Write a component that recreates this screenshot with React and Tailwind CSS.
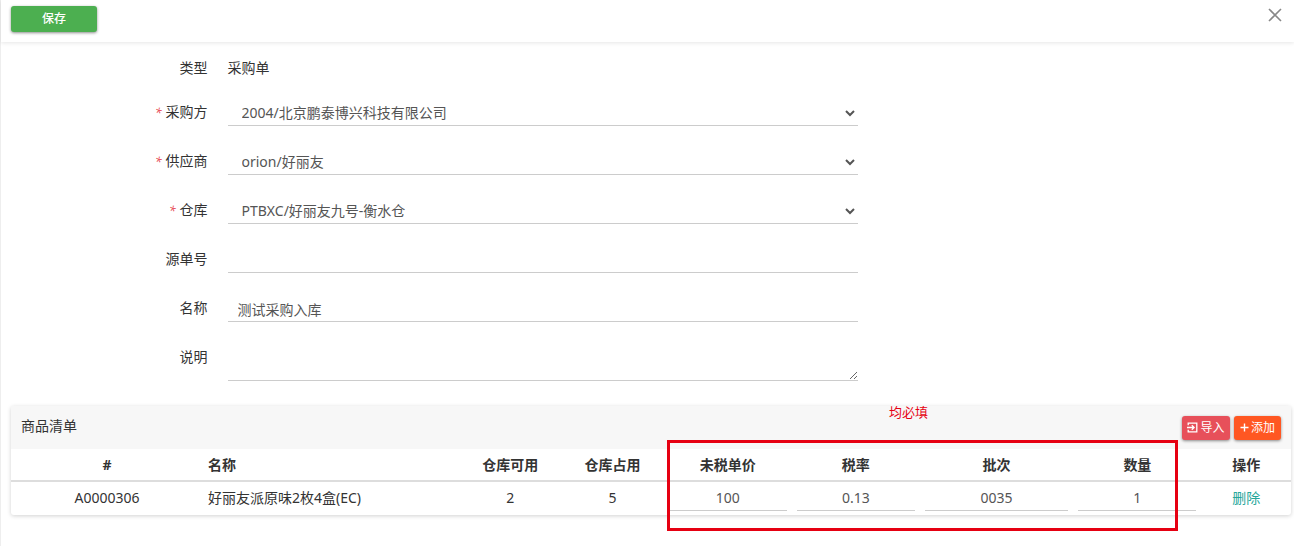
import { useState } from 'react';

const PARTNERS = ['2004/北京鹏泰博兴科技有限公司'];
const SUPPLIERS = ['orion/好丽友'];
const WAREHOUSES = ['PTBXC/好丽友九号-衡水仓'];

const ITEMS = [
  { code: 'A0000306', name: '好丽友派原味2枚4盒(EC)', free: 2, held: 5, price: '100', rate: '0.13', batch: '0035', qty: '1' },
];

const COLUMNS = [
  { title: '#', className: 'w-[15%] text-center' },
  { title: '名称', className: 'w-[20%] text-left' },
  { title: '仓库可用', className: 'w-[8%] text-center' },
  { title: '仓库占用', className: 'w-[8%] text-center' },
  { title: '未税单价', className: 'w-[10%] text-center' },
  { title: '税率', className: 'w-[10%] text-center' },
  { title: '批次', className: 'w-[12%] text-center' },
  { title: '数量', className: 'w-[10%] text-center' },
  { title: '操作', className: 'w-[7%] text-center' },
];

const fieldClass = 'block w-full border-b border-[#ccc] bg-transparent text-[#555] outline-none';

function ImportIcon() {
  return (
    <svg className="h-[11px] w-[11px]" viewBox="0 0 11 11" fill="none" stroke="currentColor" strokeWidth="1.3">
      <path d="M1.2 3.2V1.2h8.6v8.6H1.2V7.8" />
      <path d="M0 5.5h6.8M4.8 3.2l2.3 2.3-2.3 2.3" />
    </svg>
  );
}

function PlusIcon() {
  return (
    <svg className="h-[9px] w-[9px]" viewBox="0 0 9 9" fill="none" stroke="currentColor" strokeWidth="1.4">
      <path d="M4.5 0.5v8M0.5 4.5h8" />
    </svg>
  );
}

function FormRow({ id, label, required, children }) {
  return (
    <div className="flex">
      <label htmlFor={id} className="w-1/6 pr-[9px] pt-[2px] text-right leading-7 text-[#333]">
        {required && <span className="mr-1 text-xs italic text-[#e7505a]">*</span>}
        {label}
      </label>
      <div className="w-1/2 pl-[11px] pr-[5px]">{children}</div>
    </div>
  );
}

function SelectRow({ id, label, options }) {
  return (
    <FormRow id={id} label={label} required>
      <select id={id} className={`${fieldClass} mt-1 h-[26px] px-[10px]`}>
        {options.map((o) => <option key={o}>{o}</option>)}
      </select>
    </FormRow>
  );
}

function CellInput({ label, value }) {
  return (
    <td className="px-[5px]">
      <input aria-label={label} defaultValue={value} className={`${fieldClass} h-6 pb-[2px] text-center`} />
    </td>
  );
}

export default function App() {
  const [name, setName] = useState('测试采购入库');

  return (
    <div className="min-h-screen border-l border-[#eee] bg-white font-['Noto_Sans','Noto_Sans_CJK_SC',sans-serif] text-sm text-[#333]">
      <header className="flex h-[42px] items-start justify-between pl-[10px] pr-3 pt-[6px] shadow-[0_1px_4px_rgba(0,0,0,0.1)]">
        <button className="h-[26px] w-[86px] rounded-[3px] bg-[#4caf50] text-xs font-medium leading-[26px] text-white shadow-[0_1px_3px_rgba(0,0,0,0.45)]">
          保存
        </button>
        <button aria-label="关闭" className="mt-[2px] text-[#888]">
          <svg className="h-[14px] w-[14px]" viewBox="0 0 14 14" fill="none" stroke="currentColor" strokeWidth="1.6">
            <path d="M1 1l12 12M13 1L1 13" />
          </svg>
        </button>
      </header>

      <form className="flex flex-col gap-[19px] pt-[11px]">
        <div className="-mb-[6px] flex leading-[30px]">
          <span className="w-1/6 pr-[9px] text-right">类型</span>
          <span className="w-1/2 pl-[11px]">采购单</span>
        </div>
        <SelectRow id="buyer" label="采购方" options={PARTNERS} />
        <SelectRow id="supplier" label="供应商" options={SUPPLIERS} />
        <SelectRow id="warehouse" label="仓库" options={WAREHOUSES} />
        <FormRow id="source" label="源单号">
          <input id="source" className={`${fieldClass} h-[30px] px-[10px] pt-1`} />
        </FormRow>
        <FormRow id="name" label="名称">
          <input
            id="name"
            value={name}
            onChange={(e) => setName(e.target.value)}
            className={`${fieldClass} h-[30px] px-[10px] pt-1`}
          />
        </FormRow>
        <FormRow id="remark" label="说明">
          <textarea id="remark" className={`${fieldClass} h-10 resize px-[10px] pt-1`} />
        </FormRow>
      </form>

      <section className="relative ml-[10px] mr-[3px] mt-[25px] rounded-[3px] shadow-[0_1px_4px_rgba(0,0,0,0.18)]">
        <div className="flex h-[43px] items-center justify-between bg-[#f7f7f7] px-[10px]">
          <h2 className="pb-1">商品清单</h2>
          <div className="flex gap-1 text-xs text-white">
            <button className="flex h-6 w-12 items-center justify-center gap-[2px] rounded-[3px] bg-[#e7505a] shadow-[0_1px_3px_rgba(0,0,0,0.45)]">
              <ImportIcon />
              导入
            </button>
            <button className="flex h-6 w-[47px] items-center justify-center gap-[2px] rounded-[3px] bg-[#ff5722] shadow-[0_1px_3px_rgba(0,0,0,0.45)]">
              <PlusIcon />
              添加
            </button>
          </div>
        </div>

        <table className="w-full table-fixed">
          <thead>
            <tr className="h-8 border-b-2 border-[#ddd]">
              {COLUMNS.map((c) => (
                <th key={c.title} className={`${c.className} px-[5px] font-bold`}>{c.title}</th>
              ))}
            </tr>
          </thead>
          <tbody>
            {ITEMS.map((item) => (
              <tr key={item.code} className="h-[34px] text-center">
                <td className="pb-[2px]">{item.code}</td>
                <td className="px-[5px] pb-[2px] text-left">{item.name}</td>
                <td className="pb-[2px]">{item.free}</td>
                <td className="pb-[2px]">{item.held}</td>
                <CellInput label="未税单价" value={item.price} />
                <CellInput label="税率" value={item.rate} />
                <CellInput label="批次" value={item.batch} />
                <CellInput label="数量" value={item.qty} />
                <td className="pb-[2px]"><a href="#delete" className="text-[#26a69a]">删除</a></td>
              </tr>
            ))}
          </tbody>
        </table>

        {/* required columns marker */}
        <div className="pointer-events-none absolute -bottom-4 left-[51.25%] top-[34px] w-[39.9%] border-[3px] border-[#e60012]" />
        <span className="absolute left-[68.6%] -top-1 text-[13px] leading-5 text-[#e60012]">均必填</span>
      </section>
    </div>
  );
}
